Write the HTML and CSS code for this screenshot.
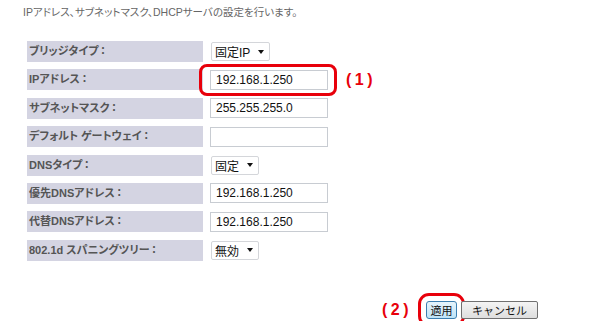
FILE: index.html
```html
<!DOCTYPE html>
<html lang="ja">
<head>
    <meta charset="UTF-8">
    <title>LAN設定</title>
    <link rel="stylesheet" href="styles.css">
</head>
<body>
    <p class="intro">IPアドレス、サブネットマスク、DHCPサーバの設定を行います。</p>

    <div class="settings">
        <div class="label">ブリッジタイプ<span class="colon">：</span></div>
        <div class="field"><span class="select">固定IP<span class="arrow"></span></span></div>

        <div class="label">IPアドレス<span class="colon">：</span></div>
        <div class="field">
            <span class="mark"><input type="text" class="text" value="192.168.1.250"></span>
            <span class="note">(1)</span>
        </div>

        <div class="label">サブネットマスク<span class="colon">：</span></div>
        <div class="field"><input type="text" class="text" value="255.255.255.0"></div>

        <div class="label">デフォルト ゲートウェイ<span class="colon">：</span></div>
        <div class="field"><input type="text" class="text" value=""></div>

        <div class="label">DNSタイプ<span class="colon">：</span></div>
        <div class="field"><span class="select">固定<span class="arrow"></span></span></div>

        <div class="label">優先DNSアドレス<span class="colon">：</span></div>
        <div class="field"><input type="text" class="text" value="192.168.1.250"></div>

        <div class="label">代替DNSアドレス<span class="colon">：</span></div>
        <div class="field"><input type="text" class="text" value="192.168.1.250"></div>

        <div class="label">802.1d スパニングツリー<span class="colon">：</span></div>
        <div class="field"><span class="select">無効<span class="arrow"></span></span></div>
    </div>

    <div class="actions">
        <span class="note">(2)</span>
        <button class="button apply">適用</button>
        <button class="button">キャンセル</button>
    </div>
</body>
</html>
```

FILE: styles.css
```css
body {
    margin: 0;
    background-color: #fff;
    font-family: "Liberation Sans", "Noto Sans CJK JP", sans-serif;
    color: #333;
}
.intro {
    margin: 0;
    padding: 5px 0 0 23px;
    height: 17px;
    font-size: 10.5px;
    line-height: 14px;
    color: #666;
    font-feature-settings: "palt";
}
.settings {
    display: grid;
    grid-template-columns: 176px auto;
    grid-auto-rows: 21px;
    column-gap: 7px;
    row-gap: 7.4px;
    margin: 19px 0 0 27px;
}
.label {
    background-color: #d4d4e2;
    color: #555;
    font-size: 11px;
    font-weight: bold;
    line-height: 21px;
    padding-left: 2px;
    font-feature-settings: "palt";
    white-space: nowrap;
}
.colon {
    font-feature-settings: normal;
    margin-left: -1px;
}
.field {
    display: flex;
    align-items: center;
}
.text {
    width: 118px;
    height: 20px;
    box-sizing: border-box;
    border: 1px solid #c8ccd2;
    padding: 0 5px;
    margin: 0;
    font-family: "Liberation Sans", sans-serif;
    font-size: 12px;
    color: #111;
    outline: none;
}
.select {
    display: inline-flex;
    align-items: center;
    height: 19px;
    box-sizing: border-box;
    border: 1px solid #d4d6da;
    border-radius: 2px;
    padding: 0 5px 0 3px;
    margin-left: 1px;
    font-size: 12px;
    color: #111;
    background-color: #fff;
}
.arrow {
    display: inline-block;
    width: 0;
    height: 0;
    margin-left: 8px;
    border-left: 3.5px solid transparent;
    border-right: 3.5px solid transparent;
    border-top: 4px solid #111;
}
.mark {
    position: relative;
    display: inline-flex;
}
.mark::after {
    content: "";
    position: absolute;
    top: -6px;
    bottom: -6px;
    left: -11px;
    right: -9px;
    border: 3px solid #e8000b;
    border-radius: 8px;
}
.note {
    color: #e8000b;
    font-family: "Liberation Sans", sans-serif;
    font-weight: bold;
    font-size: 16px;
    letter-spacing: 3.5px;
    margin-left: 18px;
}
.actions {
    display: flex;
    align-items: center;
    justify-content: flex-end;
    width: 538px;
    height: 22px;
    margin-top: 38px;
}
.actions .note {
    margin: 0 14px 0 0;
}
.button {
    height: 18px;
    box-sizing: border-box;
    border: 1px solid #707070;
    border-radius: 2px;
    background: linear-gradient(#f4f4f4, #dedede);
    font-family: "Noto Sans CJK JP", sans-serif;
    font-size: 11px;
    line-height: 14px;
    color: #111;
    padding: 0;
    width: 77px;
}
.button.apply {
    width: 31px;
    margin-right: 4px;
    border-color: #3c7fb1;
    border-radius: 3px;
    background: linear-gradient(#e6f4fc, #bee4f8);
    outline: 3px solid #e8000b;
    outline-offset: 5px;
}
```
